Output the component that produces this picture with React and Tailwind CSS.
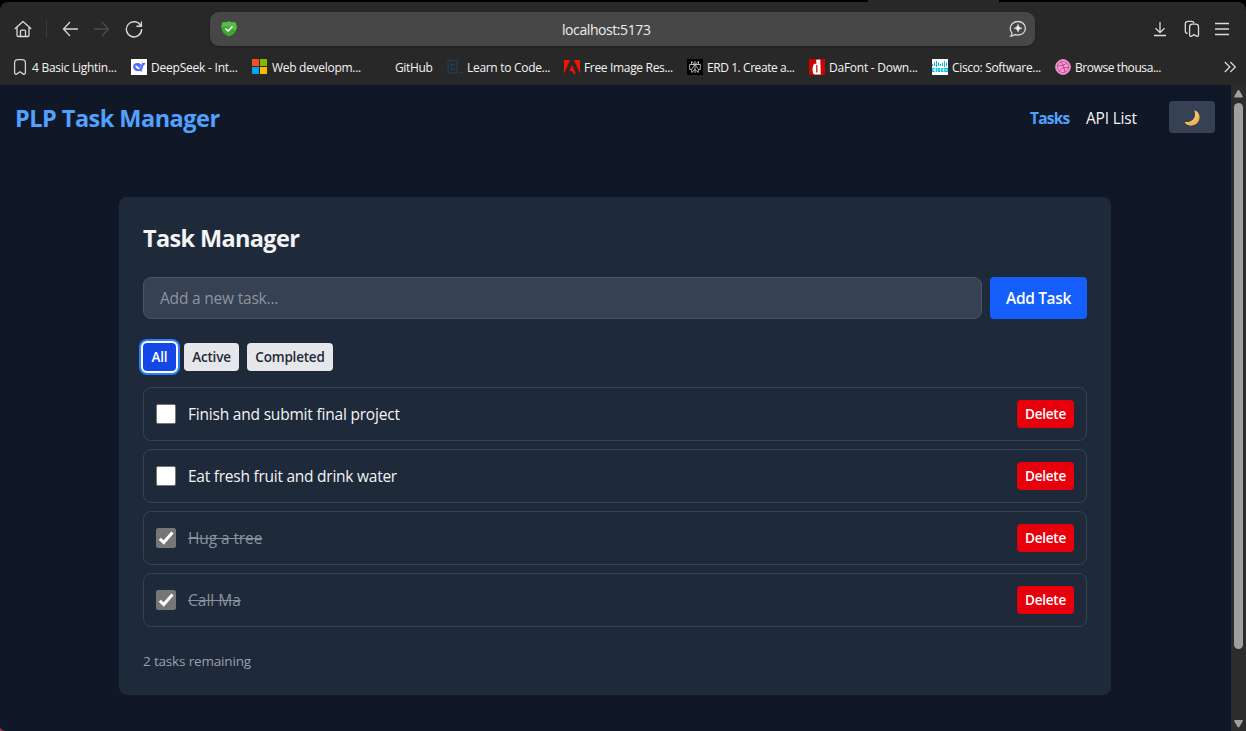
import React from "react";

const bookmarks = [
  { id: "basic", label: "4 Basic Lightin...", box: "w-[119px]", icon: <BookmarkIcon />, track: "tracking-[-0.26px]" },
  { id: "deepseek", label: "DeepSeek - Int...", box: "w-[121px]", icon: <DeepSeekIcon />, track: "tracking-[-0.22px]" },
  { id: "web", label: "Web developm...", box: "w-[123px]", icon: <MicrosoftIcon />, track: "tracking-[-0.29px]" },
  { id: "github", label: "GitHub", box: "w-[72px]", icon: <GithubIcon />, track: "tracking-[-0.35px]" },
  { id: "learn", label: "Learn to Code...", box: "w-[117px]", icon: <CodecademyIcon />, track: "tracking-[-0.3px]" },
  { id: "adobe", label: "Free Image Res...", box: "w-[123px]", icon: <AdobeIcon />, track: "tracking-[-0.33px]" },
  { id: "erd", label: "ERD 1. Create a...", box: "w-[122px]", icon: <PerplexityIcon />, track: "tracking-[-0.43px]" },
  { id: "dafont", label: "DaFont - Down...", box: "w-[123px]", icon: <DafontIcon />, track: "tracking-[-0.24px]" },
  { id: "cisco", label: "Cisco: Software...", box: "w-[123px]", icon: <CiscoIcon />, track: "tracking-[-0.33px]" },
  { id: "browse", label: "Browse thousa...", box: "w-[108px]", icon: <DribbbleIcon />, track: "tracking-[-0.42px]" },
];

const tasks = [
  { id: 1, text: "Finish and submit final project", done: false, track: "tracking-[-0.2px]" },
  { id: 2, text: "Eat fresh fruit and drink water", done: false, track: "tracking-[-0.25px]" },
  { id: 3, text: "Hug a tree", done: true, track: "tracking-[-0.1px]" },
  { id: 4, text: "Call Ma", done: true, track: "tracking-[0px]" },
];

function BookmarkIcon() {
  return (
    <svg width="16" height="18" viewBox="0 0 16 18" fill="none" stroke="#d2d2d2" strokeWidth="1.3" strokeLinejoin="round">
      <path d="M2.600 4.800C2.600 2.800 4 1.600 5.800 1.600h4.400c1.800 0 3.200 1.200 3.200 3.200v9.900c0 1.400-1.300 2-2.400 1.200L8 13.800l-3 2.100c-1.100.8-2.400.2-2.400-1.200Z" />
    </svg>
  );
}

function DeepSeekIcon() {
  return (
    <svg width="16" height="16" viewBox="0 0 16 16">
      <path fill="#fff" d="M0 0h16v16H0z" />
      <path fill="#4d6bfe" d="M8.300 4.200c.9.500 1.500 1 2.200 1.700.5-.7.300-1.700.6-2.500.5.500 1 .8 1.700.7.600-.1 1-.5 1.500-.4-.1 1.500-.8 2.500-2.100 2.900.1 2-.7 3.500-1.700 4.600.5.4 1 .6 1.400.8-1 .6-2.200.5-3.200.1-3.500.7-6.400-1-6.600-4.300C2 5 4.500 3.400 8.300 4.200Z" />
      <path fill="#fff" d="M4.200 6.300c2.300.3 3.500 1.700 4.800 4-2 .4-4.400-1.200-4.800-4ZM8.500 6.800l2 1.600-.5.900Z" />
    </svg>
  );
}

function MicrosoftIcon() {
  return (
    <svg width="16" height="16" viewBox="0 0 16 16" shapeRendering="crispEdges">
      <path fill="#f25022" d="M0 0h7v7H0z" />
      <path fill="#7fba00" d="M8 0h7v7H8z" />
      <path fill="#00a4ef" d="M0 8h7v7H0z" />
      <path fill="#ffb900" d="M8 8h7v7H8z" />
    </svg>
  );
}

function GithubIcon() {
  return (
    <svg width="16" height="16" viewBox="0 0 16 16" fill="none" stroke="#242c33" strokeWidth="1.2">
      <path d="M5.500 14v-2.500c-2.500-.5-3.500-2-3.500-4 0-1 .3-1.800.9-2.500V2.500L5.200 3.600a8 8 0 0 1 4.600 0l2.300-1.100V5c.6.700.9 1.500.9 2.500 0 2-1 3.500-3.500 4V14" />
    </svg>
  );
}

function CodecademyIcon() {
  return (
    <svg width="17" height="16" viewBox="0 0 17 16" fill="none" stroke="#204056" strokeWidth="1.2">
      <rect x="1" y="1.500" width="9" height="12.500" />
      <path d="M7.600 5.300H4.200v5h3.400M12.500 13.500h4" />
    </svg>
  );
}

function AdobeIcon() {
  return (
    <svg width="16" height="16" viewBox="0 0 16 16" fill="#fa0f00">
      <path d="M0 1h6L0 14.700zM10 1h6v13.700zM8 5.800l3.900 9H9.300l-1.100-2.900H5.300Z" />
    </svg>
  );
}

function PerplexityIcon() {
  return (
    <svg width="16" height="16" viewBox="0 0 16 16" fill="none" stroke="#c4c4c4" strokeWidth="0.9">
      <path fill="#000" stroke="none" d="M0 0h16v16H0z" />
      <path d="M8 2v12M4.500 2.500v3h7v-3L8 5.600ZM2.700 5.500h10.600v5h-2v3L8 10.500l-3.300 3v-3h-2ZM8 5.500l-3.500 5M8 5.500l3.500 5" />
    </svg>
  );
}

function DafontIcon() {
  return (
    <svg width="16" height="16" viewBox="0 0 16 16">
      <path fill="#ce0000" d="M0 0h16v16H0z" />
      <path fill="#fff" fillRule="evenodd" d="M7.200.8 11.300.4 11.800 15.500H5.300C3 14.500 3.200 6.800 5 5.300c.8-.6 1.600-.6 2.400-.4ZM7.200 6v7.500h1.200V6Z" />
    </svg>
  );
}

function CiscoIcon() {
  return (
    <svg width="16" height="16" viewBox="0 0 16 16">
      <path fill="#fff" d="M0 0h16v16H0z" />
      <path stroke="#00bceb" strokeWidth="1" d="M.5 5v2M2.500 3.500V7M4.500 2v6M6.500 3.500V7M8.500 5v2M10.500 3.500V7M12.500 2v6M14.500 3.500V7" />
      <path fill="none" stroke="#00bceb" strokeWidth="1.2" d="M2.700 9.600H.8v2.800h1.900M4.300 9v4M8 9.600H6.100v1.400h1.700v1.400H5.600M11.500 9.600H9.800v2.800h1.700M12.800 9.600h2.400v2.800h-2.400Z" />
    </svg>
  );
}

function DribbbleIcon() {
  return (
    <svg width="16" height="16" viewBox="0 0 16 16" fill="none" stroke="#b8478a" strokeWidth="1">
      <circle cx="8" cy="8" r="7.400" fill="#ff9bd6" stroke="#e486c2" />
      <path d="M5.600 2.500c2.500 3 3.800 6.500 4.300 11M2 6.900c4.300.2 8-.8 10.200-3.400M4 12.600c1.500-3.300 5-4.900 9.800-3.600" />
      <circle cx="8" cy="8" r="5.600" strokeWidth="0.800" />
    </svg>
  );
}

function Shield() {
  return (
    <svg width="18" height="18" viewBox="0 0 18 18">
      <path fill="#3fa535" d="M9 1c1.700 1.300 3.400 1.600 5.500 1.300.7-.1 1 .4 1.200 1l1 3.200c-.2 5-2.400 8-7.700 10C3.700 14.500 1.500 11.500 1.300 6.500l1-3.200c.2-.6.5-1.100 1.200-1C5.600 2.600 7.300 2.300 9 1Z" />
      <path fill="#58bd48" d="M9 1c1.700 1.300 3.400 1.600 5.500 1.300.7-.1 1 .4 1.200 1l1 3.200c-.1 2-.5 3.200-1.200 4.500C11 6 6 5 1.400 7.500L1.300 6.500l1-3.200c.2-.6.5-1.100 1.200-1C5.600 2.600 7.300 2.300 9 1Z" />
      <path fill="none" stroke="#fff" strokeWidth="1.400" d="m5.400 8.600 2.700 2.500 4.400-4.500" />
    </svg>
  );
}

function Toolbar() {
  return (
    <div className="flex h-[54px] shrink-0 items-center">
      <svg className="ml-[14px]" width="18" height="18" viewBox="0 0 18 18" fill="none" stroke="#dadada" strokeWidth="1.3" strokeLinejoin="round" strokeLinecap="round">
        <path d="M1.200 8.500 9 1.500l7.800 7M3 7v8.200c0 .8.5 1.300 1.300 1.300h9.400c.8 0 1.300-.5 1.300-1.300V7M6.500 16.300v-5.200c0-.5.4-.9.900-.9h3.200c.5 0 .9.4.9.9v5.200" />
      </svg>
      <div className="ml-[14px] h-[18px] w-px bg-[#3b3b3b]" />
      <svg className="ml-[15px]" width="17" height="16" viewBox="0 0 17 16" fill="none" stroke="#d6d6d6" strokeWidth="1.3">
        <path d="M8 1 1.500 8 8 15M1.500 8H16" />
      </svg>
      <svg className="ml-[14px]" width="17" height="16" viewBox="0 0 17 16" fill="none" stroke="#4c4c4c" strokeWidth="1.3">
        <path d="m9 1 6.500 7L9 15M15.500 8H1" />
      </svg>
      <svg className="ml-[15px]" width="18" height="18" viewBox="0 0 18 18" fill="none" stroke="#d6d6d6" strokeWidth="1.400">
        <path d="M15.700 5.700A7.600 7.600 0 1 0 16.600 9M16.400 1.500v4.700h-5" />
      </svg>
      <div className="ml-[67px] flex h-[34px] w-[825px] items-center rounded-[9px] bg-[#474747] pl-[10px] pr-[8px] shadow-[0_1px_3px_rgba(0,0,0,0.25)]">
        <Shield />
        <span className="ml-[324px] mt-px text-[14px] tracking-[-0.42px] text-[#ededed]">localhost:5173</span>
        <svg className="ml-auto" width="18" height="18" viewBox="0 0 18 18" fill="none" stroke="#d8d8d8" strokeWidth="1.3">
          <path d="M9 1.500c4.300 0 7.400 2.900 7.400 6.800S13.300 15 9 15c-1 0-2-.1-2.800-.4-1.200.9-2.700 1.500-4.500 1.500.8-.8 1.300-1.700 1.400-2.700C2 12.200 1.200 10.500 1.200 8.300 1.200 4.400 4.700 1.500 9 1.500Z" />
          <path fill="#ececec" stroke="#ececec" strokeWidth="0.500" d="M9 4.300c.6 2.500 1.500 3.400 3.900 3.900C10.500 8.700 9.600 9.600 9 12.100 8.400 9.600 7.500 8.700 5.100 8.200 7.500 7.700 8.400 6.800 9 4.300Z" />
        </svg>
      </div>
      <svg className="ml-[117px]" width="16" height="16" viewBox="0 0 16 16" fill="none" stroke="#dadada" strokeWidth="1.3">
        <path d="M8 1v10.500M3.500 7.300 8 11.700l4.500-4.400M2 14.500h12" />
      </svg>
      <svg className="ml-[16px]" width="16" height="18" viewBox="0 0 16 18" fill="none" stroke="#dadada" strokeWidth="1.3" strokeLinejoin="round">
        <path d="M3.500 13.500C2 13.300 1.300 12.500 1.300 11V4c0-1.700 1-2.700 2.700-2.700h3.500c1.300 0 2.200.6 2.600 1.800M5.600 6.800c0-1.700 1-2.700 2.700-2.700h3.500c1.700 0 2.700 1 2.700 2.700v8.100c0 1.300-1 1.900-2 1.200l-2.400-1.500-2.500 1.500c-1 .7-2 .1-2-1.200Z" />
      </svg>
      <svg className="ml-[15px]" width="14" height="14" viewBox="0 0 14 14" fill="none" stroke="#dadada" strokeWidth="1.3">
        <path d="M0 1.500h14M0 7h14M0 12.500h14" />
      </svg>
    </div>
  );
}

function Bookmarks() {
  return (
    <div className="flex h-[29px] shrink-0 items-center pb-[9px] pl-[12px] pt-[2px]">
      {bookmarks.map((b) => (
        <div key={b.id} className={`flex h-[18px] shrink-0 items-center ${b.box}`}>
          <span className="flex w-[20px] shrink-0 items-center">{b.icon}</span>
          <span className={`mt-[2px] whitespace-nowrap text-[12px] leading-[18px] text-[#f4f4f4] ${b.track}`}>{b.label}</span>
        </div>
      ))}
      <svg className="ml-auto mr-[10px]" width="12" height="12" viewBox="0 0 12 12" fill="none" stroke="#d6d6d6" strokeWidth="1.3">
        <path d="m.8 1 5 5-5 5M6.300 1l5 5-5 5" />
      </svg>
    </div>
  );
}

function Moon() {
  return (
    <svg className="mt-0.5" width="18" height="18" viewBox="0 0 18 18">
      <path fill="#fbc765" d="M11.300 1.300c3.900 1.300 5.900 4.900 5 8.700-1.100 4.700-5.600 7.200-10 6.300-2-.4-3.700-1.600-4.700-3.400 3.700.6 7-.3 9-2.900 1.900-2.600 1.900-5.800.7-8.700Z" />
      <path fill="#e59a4c" d="M1.900 13.400c4.600.9 9.200-.7 11.500-4.400 1.200-2 1.400-4 .9-5.900 1.900 1.800 2.600 4.400 2 6.900-1.100 4.700-5.600 7.200-10 6.300-1.900-.4-3.400-1.400-4.400-2.900Z" opacity=".4" />
    </svg>
  );
}

function Checkbox({ checked }) {
  return (
    <span
      role="checkbox"
      aria-checked={checked}
      className={`flex size-5 shrink-0 items-center justify-center rounded-[2px] border border-[#767676] ${checked ? "bg-[#767676]" : "bg-white"}`}
    >
      {checked && (
        <svg className="shrink-0" width="18" height="18" viewBox="0 0 18 18" fill="none" stroke="#fff" strokeWidth="3">
          <path d="m2.800 9.700 3.900 3.900 8.800-10" />
        </svg>
      )}
    </span>
  );
}

function TaskRow({ task }) {
  return (
    <li className="flex h-[54px] items-center rounded-lg border border-[#364153] px-3">
      <Checkbox checked={task.done} />
      <span className={`ml-3 flex-1 text-[15.5px] leading-6 ${task.track} ${task.done ? "text-[#8b929d] line-through" : "text-gray-100"}`}>
        {task.text}
      </span>
      <button className="h-7 w-[57px] rounded bg-[#e7000b] text-[13.5px] font-semibold tracking-[-0.25px] text-white">Delete</button>
    </li>
  );
}

function Page() {
  return (
    <main className="min-w-0 flex-1 bg-[#101828]">
      <header className="flex h-16 items-center pl-[15px] pr-4">
        <h1 className="pt-0.5 text-[23.5px] font-bold leading-8 tracking-[-0.52px] text-[#51a2ff]">PLP Task Manager</h1>
        <nav className="ml-auto flex items-center text-[15.5px] leading-6">
          <a className="w-[56px] whitespace-nowrap pt-0.5 font-bold tracking-[-0.8px] text-[#51a2ff]">Tasks</a>
          <a className="w-[83px] whitespace-nowrap pt-0.5 tracking-[-0.2px] text-gray-100">API List</a>
          <button className="flex h-8 w-[46px] items-center justify-center rounded bg-[#364153]">
            <Moon />
          </button>
        </nav>
      </header>
      <section className="ml-[119px] mt-12 h-[498px] w-[992px] rounded-lg bg-[#1e2939] p-6">
        <h2 className="text-[23.5px] font-bold leading-[34px] tracking-[-0.65px] text-gray-100">Task Manager</h2>
        <div className="mt-[22px] flex h-[42px] gap-2">
          <input
            className="min-w-0 flex-1 rounded-lg border border-[#4a5565] bg-[#364153] px-4 pt-0.5 text-[15.5px] tracking-[-0.2px] placeholder:text-[#8e949e]"
            placeholder="Add a new task..."
          />
          <button className="w-[97px] rounded bg-[#155dfc] pt-0.5 text-[15.5px] font-semibold tracking-[-0.35px] text-white">Add Task</button>
        </div>
        <div className="mt-6 flex gap-2 text-[13.5px] font-semibold">
          <button className="h-7 w-[33px] rounded bg-[#1447e6] tracking-[-0.2px] text-white ring-4 ring-[#2b7fff] outline-2 outline-white">All</button>
          <button className="h-7 w-[55px] rounded bg-gray-200 tracking-[-0.2px] text-gray-800">Active</button>
          <button className="h-7 w-[86px] rounded bg-gray-200 tracking-[-0.2px] text-gray-800">Completed</button>
        </div>
        <ul className="mt-4 flex flex-col gap-2">
          {tasks.map((t) => (
            <TaskRow key={t.id} task={t} />
          ))}
        </ul>
        <p className="mt-6 text-[13.5px] leading-5 tracking-[-0.17px] text-gray-400">2 tasks remaining</p>
      </section>
    </main>
  );
}

function Scrollbar() {
  return (
    <aside className="flex w-[15px] flex-col items-center bg-[#2c2c2c] pb-[3px] pt-[5px]">
      <svg width="9" height="8" viewBox="0 0 9 8" fill="#9f9f9f">
        <path d="M4.500 0c.4 0 .7.2.9.5l3.300 5.800c.3.6 0 1.200-.7 1.200H1C.3 7.500 0 6.900.3 6.300L3.600.5c.2-.3.5-.5.9-.5Z" />
      </svg>
      <div className="mt-[5px] h-[546px] w-[9px] rounded-full bg-[#9f9f9f]" />
      <svg className="mt-auto" width="9" height="8" viewBox="0 0 9 8" fill="#9f9f9f">
        <path d="M4.500 7.500c.4 0 .7-.2.9-.5l3.300-5.800C9 .6 8.700 0 8 0H1C.3 0 0 .6.3 1.200L3.600 7c.2.3.5.5.9.5Z" />
      </svg>
    </aside>
  );
}

export default function App() {
  return (
    <div className="relative flex h-[731px] w-[1246px] flex-col overflow-hidden bg-black font-['Open_Sans','Noto_Sans',sans-serif]">
      <div className="h-[2px] shrink-0 pl-[868px]">
        <div className="h-full w-[131px] bg-[#282828]" />
      </div>
      <div className="flex min-h-0 flex-1 flex-col overflow-hidden rounded-t-[8px] bg-[#282828]">
        <Toolbar />
        <Bookmarks />
        <div className="flex min-h-0 flex-1">
          <Page />
          <Scrollbar />
        </div>
      </div>
      <svg className="absolute bottom-0 left-0" width="5" height="4" viewBox="0 0 5 4">
        <path fill="#a32a50" d="M0 0C.5 2 2.500 3.500 5 4H0Z" />
      </svg>
    </div>
  );
}
